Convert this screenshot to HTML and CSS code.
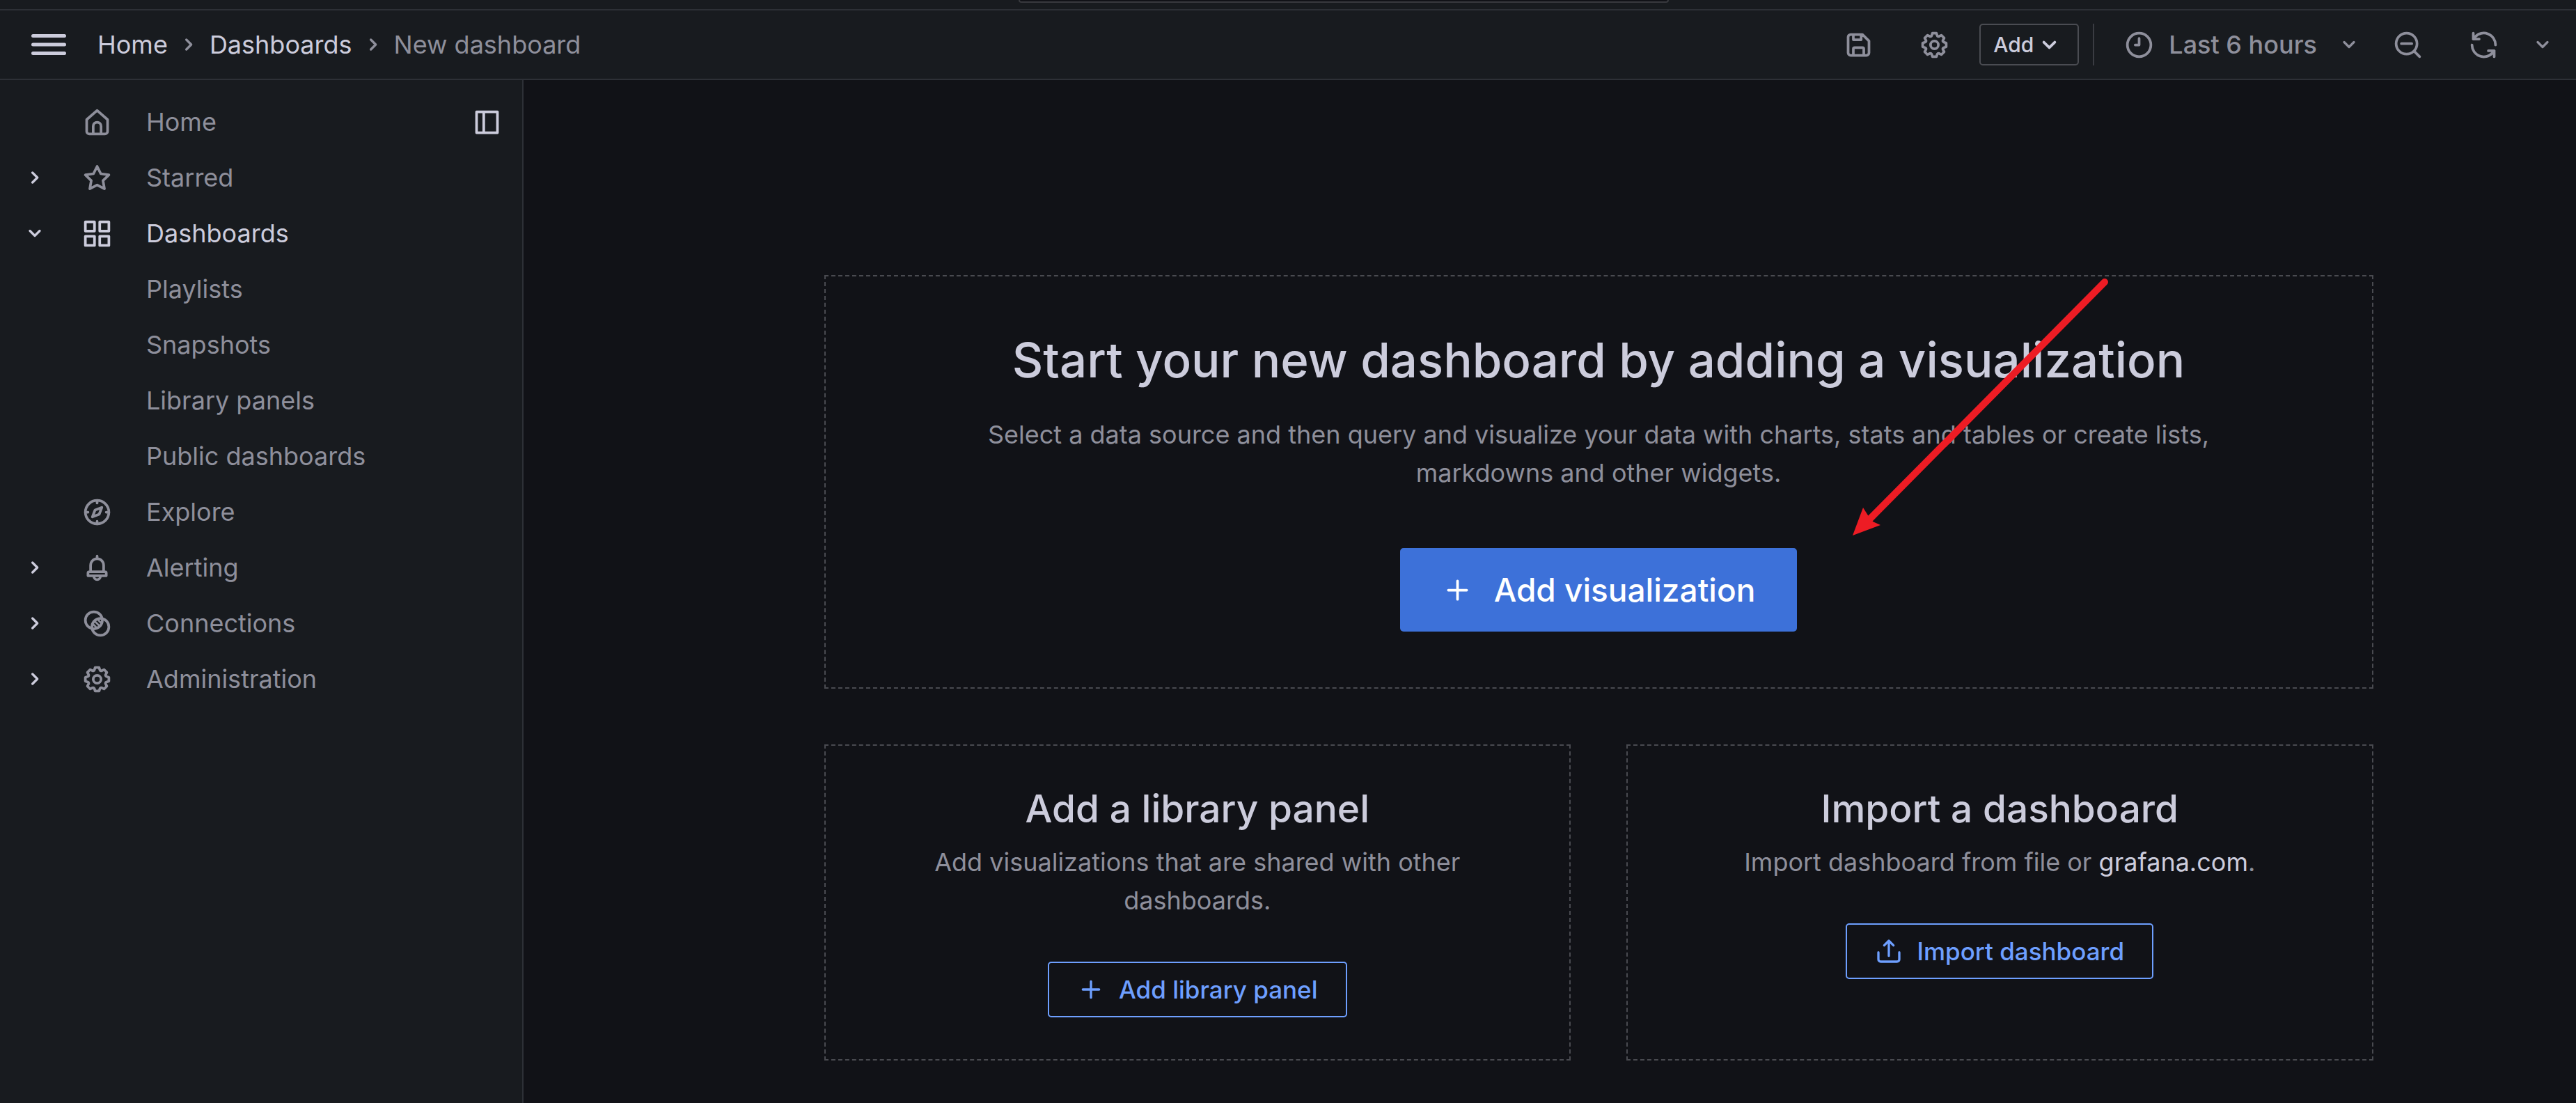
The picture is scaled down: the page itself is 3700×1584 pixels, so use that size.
FILE: index.html
```html
<!DOCTYPE html>
<html lang="en">
<head>
<meta charset="utf-8">
<title>New dashboard - Dashboards - Grafana</title>
<link rel="stylesheet" href="styles.css">
</head>
<body>
<svg class="sprite" aria-hidden="true">
  <symbol id="bars" viewBox="0 0 24 24"><path d="M3,8H21a1,1,0,0,0,0-2H3A1,1,0,0,0,3,8Zm18,8H3a1,1,0,0,0,0,2H21a1,1,0,0,0,0-2Zm0-5H3a1,1,0,0,0,0,2H21a1,1,0,0,0,0-2Z"/></symbol>
  <symbol id="angle-right" viewBox="0 0 24 24"><path class="line" d="M10 7.800l4.200 4.200-4.200 4.200"/></symbol>
  <symbol id="angle-down" viewBox="0 0 24 24"><path class="line" d="M7.800 9.900l4.200 4.200 4.200-4.200"/></symbol>
  <symbol id="save" viewBox="0 0 24 24"><path class="line" d="M4 6a2 2 0 0 1 2-2h9l5 5v9a2 2 0 0 1-2 2H6a2 2 0 0 1-2-2zM8 4v4h6V4M8 20v-5a1 1 0 0 1 1-1h6a1 1 0 0 1 1 1v5"/></symbol>
  <symbol id="cog" viewBox="0 0 24 24"><path d="M21.32,9.55l-1.89-.63.89-1.78A1,1,0,0,0,20.13,6L18,3.87a1,1,0,0,0-1.15-.19l-1.78.89-.63-1.89A1,1,0,0,0,13.5,2h-3a1,1,0,0,0-.95.68L8.92,4.57,7.14,3.68A1,1,0,0,0,6,3.87L3.87,6a1,1,0,0,0-.19,1.15l.89,1.78-1.89.63A1,1,0,0,0,2,10.5v3a1,1,0,0,0,.68.95l1.89.63-.89,1.78A1,1,0,0,0,3.87,18L6,20.13a1,1,0,0,0,1.15.19l1.78-.89.63,1.89a1,1,0,0,0,.95.68h3a1,1,0,0,0,.95-.68l.63-1.89,1.78.89A1,1,0,0,0,18,20.13L20.13,18a1,1,0,0,0,.19-1.15l-.89-1.78,1.89-.63A1,1,0,0,0,22,13.5v-3A1,1,0,0,0,21.32,9.55ZM20,12.78l-1.2.4A2,2,0,0,0,17.64,16l.57,1.14-1.1,1.1L16,17.64a2,2,0,0,0-2.79,1.16l-.4,1.2H11.22l-.4-1.2A2,2,0,0,0,8,17.64l-1.14.57-1.1-1.1L6.36,16A2,2,0,0,0,5.2,13.18L4,12.78V11.22l1.2-.4A2,2,0,0,0,6.36,8L5.79,6.89l1.1-1.1L8,6.36A2,2,0,0,0,10.82,5.2l.4-1.2h1.56l.4,1.2A2,2,0,0,0,16,6.36l1.14-.57,1.1,1.1L17.64,8a2,2,0,0,0,1.16,2.79l1.2.4ZM12,8a4,4,0,1,0,4,4A4,4,0,0,0,12,8Zm0,6a2,2,0,1,1,2-2A2,2,0,0,1,12,14Z"/></symbol>
  <symbol id="clock" viewBox="0 0 24 24"><circle class="line" cx="12" cy="12" r="9"/><path class="line" d="M12 7v5H9"/></symbol>
  <symbol id="search-minus" viewBox="0 0 24 24"><circle class="line" cx="11" cy="11" r="8"/><path class="line" d="M7 11h8M17 17l4 4"/></symbol>
  <symbol id="sync" viewBox="0 0 24 24"><path class="line" d="M3 12a9 9 0 0 0 15.600 6.200L20 16.500M15.500 16.500H20V21M21 12A9 9 0 0 0 5.400 5.800L4 7.500M8.500 7.500H4V3"/></symbol>
  <symbol id="home" viewBox="0 0 24 24"><path class="line" d="M4 10l8-7 8 7v9a2 2 0 0 1-2 2H6a2 2 0 0 1-2-2zM9 21v-6a3 3 0 0 1 6 0v6"/></symbol>
  <symbol id="dock" viewBox="0 0 24 24"><path class="line" d="M4 4h16v16H4zM9.500 4v16"/></symbol>
  <symbol id="star" viewBox="0 0 24 24"><path class="line" d="M12 3.200l2.800 5.600 6.200.9-4.500 4.400 1.100 6.200L12 17.400l-5.600 2.900 1.100-6.200L3 9.700l6.200-.9z"/></symbol>
  <symbol id="apps" viewBox="0 0 24 24"><path class="line" d="M3 3h7v7H3zM14 3h7v7h-7zM3 14h7v7H3zM14 14h7v7h-7z"/></symbol>
  <symbol id="compass" viewBox="0 0 24 24"><circle class="line" cx="12" cy="12" r="9"/><path class="line" d="M15.600 8.400l-2 5.200-5.200 2 2-5.200zM12 3v2M12 19v2M3 12h2M19 12h2"/></symbol>
  <symbol id="bell" viewBox="0 0 24 24"><path class="line" d="M12 3v2M7 15v-5a5 5 0 0 1 10 0v5M6 15h12a1 1 0 0 1 1 1v2H5v-2a1 1 0 0 1 1-1zM9.500 18.500a2.500 2.500 0 0 0 5 0"/></symbol>
  <symbol id="link" viewBox="0 0 24 24"><circle class="line" cx="9.500" cy="9.500" r="6.500"/><circle class="line" cx="14.500" cy="14.500" r="6.500"/><path class="line hatch" d="M10 10l4 4M8.500 12l3.500 3.500M12 8.500l3.500 3.500"/></symbol>
  <symbol id="plus" viewBox="0 0 24 24"><path class="line" d="M12 5v14M5 12h14"/></symbol>
  <symbol id="upload" viewBox="0 0 24 24"><path class="line" d="M3 13v6a2 2 0 0 0 2 2h14a2 2 0 0 0 2-2v-6M12 16V3M8 7l4-4 4 4"/></symbol>
</svg>

<div class="search-bar"><div class="search-box"></div></div>

<header class="toolbar">
  <button class="icon-button menu" aria-label="Toggle menu"><svg class="icon icon-xl"><use href="#bars"/></svg></button>
  <nav class="crumbs" aria-label="Breadcrumbs">
    <a href="#home">Home</a>
    <svg class="icon icon-md"><use href="#angle-right"/></svg>
    <a href="#dashboards">Dashboards</a>
    <svg class="icon icon-md"><use href="#angle-right"/></svg>
    <span class="current">New dashboard</span>
  </nav>
  <div class="actions">
    <button class="icon-button" aria-label="Save dashboard"><svg class="icon"><use href="#save"/></svg></button>
    <button class="icon-button settings" aria-label="Dashboard settings"><svg class="icon"><use href="#cog"/></svg></button>
    <button class="add-button">Add <svg class="icon"><use href="#angle-down"/></svg></button>
    <span class="divider"></span>
    <button class="time-button"><svg class="icon"><use href="#clock"/></svg>Last 6 hours<svg class="icon icon-md caret"><use href="#angle-down"/></svg></button>
    <button class="icon-button zoom-out" aria-label="Zoom out"><svg class="icon"><use href="#search-minus"/></svg></button>
    <button class="icon-button refresh" aria-label="Refresh"><svg class="icon"><use href="#sync"/></svg></button>
    <button class="icon-button" aria-label="Refresh interval"><svg class="icon icon-md"><use href="#angle-down"/></svg></button>
  </div>
</header>

<div class="body">
  <nav class="sidebar" aria-label="Main">
    <ul>
      <li><span class="toggle"></span><a href="#home"><svg class="icon"><use href="#home"/></svg>Home</a><button class="icon-button dock" aria-label="Undock menu"><svg class="icon"><use href="#dock"/></svg></button></li>
      <li><button class="toggle" aria-label="Expand Starred"><svg class="icon icon-md"><use href="#angle-right"/></svg></button><a href="#starred"><svg class="icon"><use href="#star"/></svg>Starred</a></li>
      <li class="active"><button class="toggle" aria-label="Collapse Dashboards"><svg class="icon icon-md"><use href="#angle-down"/></svg></button><a href="#dashboards"><svg class="icon"><use href="#apps"/></svg>Dashboards</a></li>
      <li class="child"><a href="#playlists">Playlists</a></li>
      <li class="child"><a href="#snapshots">Snapshots</a></li>
      <li class="child"><a href="#library">Library panels</a></li>
      <li class="child"><a href="#public">Public dashboards</a></li>
      <li><span class="toggle"></span><a href="#explore"><svg class="icon"><use href="#compass"/></svg>Explore</a></li>
      <li><button class="toggle" aria-label="Expand Alerting"><svg class="icon icon-md"><use href="#angle-right"/></svg></button><a href="#alerting"><svg class="icon"><use href="#bell"/></svg>Alerting</a></li>
      <li><button class="toggle" aria-label="Expand Connections"><svg class="icon icon-md"><use href="#angle-right"/></svg></button><a href="#connections"><svg class="icon"><use href="#link"/></svg>Connections</a></li>
      <li><button class="toggle" aria-label="Expand Administration"><svg class="icon icon-md"><use href="#angle-right"/></svg></button><a href="#admin"><svg class="icon"><use href="#cog"/></svg>Administration</a></li>
    </ul>
  </nav>

  <main class="content">
    <div class="cards">
      <section class="card card-main">
        <h1>Start your new dashboard by adding a visualization</h1>
        <p>Select a data source and then query and visualize your data with charts, stats and tables or create lists, markdowns and other widgets.</p>
        <button class="button primary"><svg class="icon"><use href="#plus"/></svg>Add visualization</button>
        <svg class="arrow" viewBox="0 0 380 380" aria-hidden="true">
          <path class="shaft" d="M366 13L28 354"/>
          <path class="head" d="M4 377L19 337 26 348 33 357 44 362z"/>
        </svg>
      </section>
      <section class="card">
        <h2>Add a library panel</h2>
        <p>Add visualizations that are shared with other dashboards.</p>
        <button class="button outline"><svg class="icon icon-md"><use href="#plus"/></svg>Add library panel</button>
      </section>
      <section class="card">
        <h2>Import a dashboard</h2>
        <p>Import dashboard from file or <a href="#grafana">grafana.com</a>.</p>
        <button class="button outline"><svg class="icon icon-md"><use href="#upload"/></svg>Import dashboard</button>
      </section>
    </div>
  </main>
</div>
</body>
</html>
```
FILE: styles.css
```css
:root {
  --canvas: #111217;
  --surface: #181b1f;
  --line: #2d3036;
  --text: #ccccdc;
  --muted: #8e8f9b;
  --blue: #3d71d9;
  --link: #6e9fff;
}

* { box-sizing: border-box; }

body {
  margin: 0;
  min-height: 100vh;
  display: flex;
  flex-direction: column;
  background: var(--canvas);
  color: var(--text);
  font: 400 36px/55px Inter, "Liberation Sans", sans-serif;
}

h1, h2, p, ul { margin: 0; padding: 0; }
ul { list-style: none; }
a { color: inherit; text-decoration: none; }

button {
  display: flex;
  align-items: center;
  margin: 0;
  padding: 0;
  border: 0;
  background: none;
  color: inherit;
  font: inherit;
  cursor: pointer;
}

.sprite { display: none; }
.line { fill: none; stroke: currentColor; stroke-width: 2; stroke-linecap: round; stroke-linejoin: round; }
.hatch { stroke-width: 1.4; }

.icon { width: 45px; height: 45px; flex: none; fill: currentColor; }
.icon-md { width: 40px; height: 40px; }
.icon-xl { width: 60px; height: 60px; }

/* Top bars */
.search-bar {
  height: 15px;
  padding-left: 160px;
  background: var(--surface);
  border-bottom: 2px solid var(--line);
}
.search-box {
  width: 934px;
  height: 4px;
  margin: 0 auto;
  border: 2px solid #38393e;
  border-top: 0;
  border-radius: 0 0 5px 5px;
  background: var(--canvas);
}

.toolbar {
  height: 100px;
  display: flex;
  align-items: center;
  padding: 0 28px 0 40px;
  background: var(--surface);
  border-bottom: 2px solid var(--line);
}
.crumbs { display: flex; align-items: center; gap: 10px; margin-left: 40px; }
.crumbs .icon, .current { color: var(--muted); }

.actions { display: flex; align-items: center; margin-left: auto; color: var(--muted); }
.settings { margin: 0 42px 0 64px; }
.add-button {
  height: 60px;
  padding: 0 18px;
  border: 2px solid #4a4c52;
  border-radius: 5px;
  color: var(--text);
  font-size: 30px;
  font-weight: 500;
}
.divider { width: 2px; height: 60px; margin: 0 42px 0 20px; background: #3a3c42; }
.time-button { font-weight: 500; gap: 20px; }
.caret { margin-left: 6px; }
.zoom-out { margin-left: 42px; }
.refresh { margin: 0 42px 0 64px; }

/* Navigation */
.body { flex: 1; display: flex; }
.sidebar {
  width: 752px;
  flex: none;
  padding: 20px 0;
  background: var(--surface);
  border-right: 2px solid var(--line);
  color: var(--muted);
}
.sidebar li { height: 80px; display: flex; align-items: center; padding: 0 28px 0 30px; }
.sidebar a { flex: 1; display: flex; align-items: center; gap: 48px; }
.toggle { width: 40px; margin-right: 47px; color: var(--text); }
.dock { color: var(--text); }
.sidebar .active { color: var(--text); }
.sidebar .child { padding-left: 210px; }

/* Empty dashboard */
.content { flex: 1; padding: 280px 0 60px 140px; }
.cards {
  max-width: 2225px;
  margin: 0 auto;
  display: grid;
  grid-template-columns: 1fr 1fr;
  gap: 80px;
}
.card {
  display: flex;
  flex-direction: column;
  align-items: center;
  padding: 60px 80px;
  border: 2px dashed #494a50;
  text-align: center;
}
.card-main { position: relative; grid-column: 1 / -1; padding: 80px; }
h1 { font-size: 69px; line-height: 80px; font-weight: 500; }
h2 { font-size: 55px; line-height: 60px; font-weight: 500; }
.card p { margin: 20px 0 60px; max-width: 1800px; color: var(--muted); }
.card-main p { margin: 40px 0 80px; }
.card p a { color: var(--text); }

.button { height: 80px; padding: 0 40px; gap: 20px; border-radius: 5px; font-size: 35px; font-weight: 500; }
.outline { border: 2px solid var(--link); color: var(--link); }
.primary { height: 120px; padding: 0 60px; gap: 30px; background: var(--blue); color: #fff; font-size: 46px; }

.arrow { position: absolute; top: -5px; right: 370px; width: 380px; height: 380px; }
.shaft { fill: none; stroke: #ed1c24; stroke-width: 10; stroke-linecap: round; }
.head { fill: #ed1c24; }
```
